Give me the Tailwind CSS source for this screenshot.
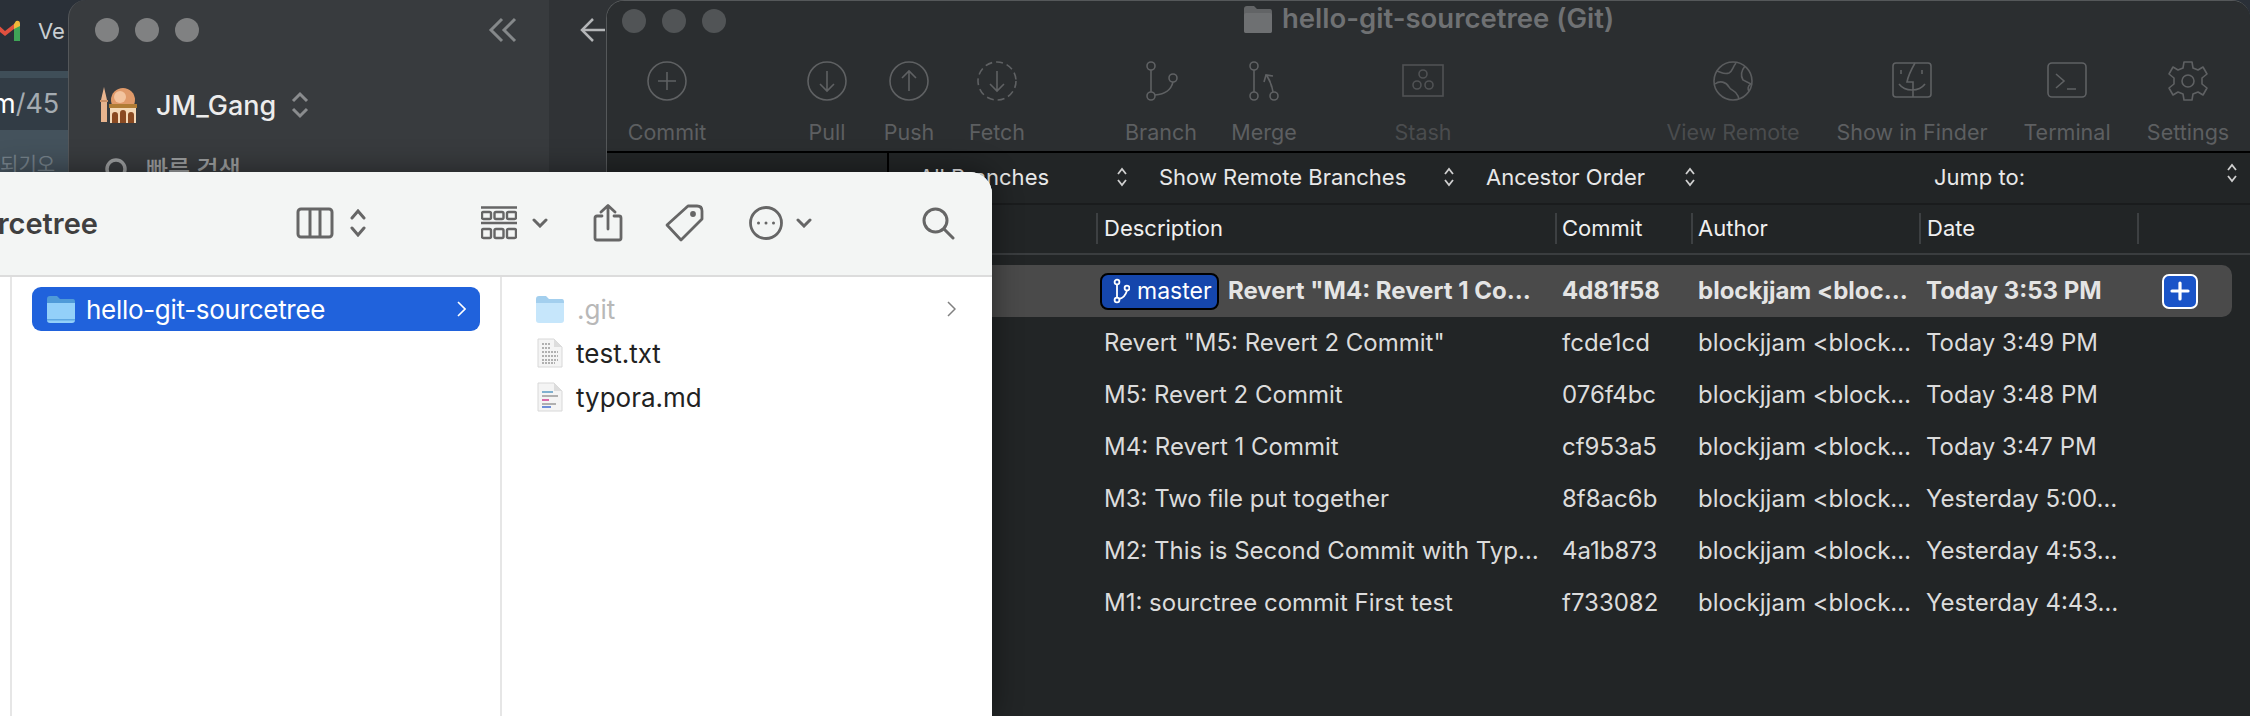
<!doctype html>
<html><head><meta charset="utf-8"><script src="https://cdn.jsdelivr.net/npm/@tailwindcss/browser@4"></script></head>
<body class="m-0 overflow-hidden">
<div class="relative w-[2250px] h-[716px] overflow-hidden bg-[#2a3038] font-['Inter','Noto_Sans_CJK_KR',sans-serif]">

  <!-- desktop window behind: browser -->
  <div class="absolute left-0 top-0 w-[80px] h-[180px] flex flex-col bg-[#2a3038]">
    <div class="h-[76px] flex items-center gap-[18px] pb-[8px] text-[#c9ced2] text-[22px]">
      <svg width="20" height="22" viewBox="0 0 20 22"><path d="M-4 3 L5 11 L14 4 V9 L5 16 L-4 9Z" fill="#e0503f"/><path d="M14 4 L16 1 Q20 0 20 4 V8 L14 12Z" fill="#f0b83a"/><path d="M14 9 L20 6 V21 H14Z" fill="#3fa457"/></svg>
      <span>Ve</span>
    </div>
    <div class="h-[8px] bg-[#3f4e58]"></div>
    <div class="h-[56px] bg-[#323c45] flex items-center text-[27px] whitespace-nowrap"><span class="text-white ml-[-8px]">m</span><span class="text-[#a4abb1]">/45</span></div>
    <div class="flex-1 bg-[#44525c] text-[#75818a] text-[20px] pt-[20px] whitespace-nowrap">되기오</div>
  </div>

  <!-- Notion-like window -->
  <div class="absolute left-[68px] top-0 w-[560px] h-[200px] rounded-tl-[18px] border-l border-[#54575a] bg-[#383b3e] flex">
    <div class="w-[480px] flex flex-col">
      <div class="h-[60px] flex items-center pl-[26px] pr-[32px]">
        <div class="flex gap-[16px]">
          <div class="w-[24px] h-[24px] rounded-full bg-[#808182]"></div>
          <div class="w-[24px] h-[24px] rounded-full bg-[#808182]"></div>
          <div class="w-[24px] h-[24px] rounded-full bg-[#808182]"></div>
        </div>
        <svg class="ml-auto" width="29" height="26" viewBox="0 0 29 26" fill="none" stroke="#85888a" stroke-width="3"><path d="M14 2 L3 13 L14 24"/><path d="M27 2 L16 13 L27 24"/></svg>
      </div>
      <div class="h-[60px] mt-[15px] flex items-center pl-[31px]">
        <svg width="38" height="38" viewBox="0 0 38 38"><path d="M4 1 L7 14 V36 H1 V14Z" fill="#e8b48e"/><rect x="0" y="14" width="8" height="2" fill="#c98f66"/><circle cx="23" cy="14" r="12" fill="#e09a6a"/><circle cx="20" cy="11" r="6" fill="#f3c49f"/><rect x="9" y="18" width="28" height="4" fill="#b07c35"/><rect x="10" y="22" width="26" height="15" fill="#f4d9b8"/><path d="M12 37 V29 a3 3 0 0 1 6 0 V37Z M20 37 V27 a3 3 0 0 1 6 0 V37Z M28 37 V29 a3 3 0 0 1 6 0 V37Z" fill="#8a4a22"/></svg>
        <span class="ml-[18px] text-[27px] leading-none font-medium text-[#ececec]">JM_Gang</span>
        <svg class="ml-[15px]" width="18" height="28" viewBox="0 0 18 28" fill="none" stroke="#8a8c8e" stroke-width="3"><path d="M2 10 L9 3 L16 10"/><path d="M2 18 L9 25 L16 18"/></svg>
      </div>
      <div class="flex items-center pl-[36px] mt-[-2px] pt-[14px] h-[60px] text-[#9c9e9f] text-[24px] font-medium">
        <svg width="24" height="24" viewBox="0 0 24 24" fill="none" stroke="#9c9e9f" stroke-width="3.5"><circle cx="11" cy="11" r="9"/><path d="M17 17 L23 23"/></svg>
        <span class="ml-[17px] leading-none">빠른 검색</span>
      </div>
    </div>
    <div class="flex-1 bg-[#303336] pt-[17px] pl-[30px]">
      <svg width="26" height="26" viewBox="0 0 26 26" fill="none" stroke="#b4b6b8" stroke-width="2.5"><path d="M14 2 L3 13 L14 24"/><path d="M3 13 H26"/></svg>
    </div>
  </div>

  <!-- Sourcetree window -->
  <div class="absolute left-[606px] top-0 w-[1644px] h-[716px] rounded-t-[18px] border-l border-t border-[#55585a] bg-[#222526] overflow-hidden flex flex-col">
    <!-- title + toolbar -->
    <div class="relative h-[152px] bg-[#2b2e30] border-b-2 border-black shrink-0">
      <div class="absolute left-[15px] top-[8px] flex gap-[16px]">
        <div class="w-[24px] h-[24px] rounded-full bg-[#515456]"></div>
        <div class="w-[24px] h-[24px] rounded-full bg-[#515456]"></div>
        <div class="w-[24px] h-[24px] rounded-full bg-[#515456]"></div>
      </div>
      <div class="absolute left-[636px] top-0 h-[36px] flex items-center">
        <svg width="30" height="27" viewBox="0 0 30 27"><path d="M1 3 Q1 0 4 0 H11 L14 3 H27 Q29 3 29 6 V24 Q29 27 27 27 H3 Q1 27 1 24Z" fill="#626466"/><rect x="1" y="7" width="28" height="20" rx="2" fill="#6e7072"/></svg>
        <span class="ml-[9px] text-[#6f7173] text-[27.500px] font-semibold whitespace-nowrap">hello-git-sourcetree (Git)</span>
      </div>
      <div class="flex pt-[59px] pl-[30px] text-[21.500px] text-[#5d5f61] whitespace-nowrap">
        <div class="w-[60px] flex flex-col items-center">
          <svg width="42" height="42" viewBox="0 0 42 42" fill="none" stroke="#5f6163" stroke-width="1.6"><circle cx="21" cy="21" r="19"/><path d="M21 12 V30 M12 21 H30"/></svg>
          <span class="mt-[16px] leading-[28px]">Commit</span>
        </div>
        <div class="w-[60px] ml-[100px] flex flex-col items-center">
          <svg width="42" height="42" viewBox="0 0 42 42" fill="none" stroke="#5f6163" stroke-width="1.6"><circle cx="21" cy="21" r="19"/><path d="M21 11 V31 M14 24 L21 31 L28 24"/></svg>
          <span class="mt-[16px] leading-[28px]">Pull</span>
        </div>
        <div class="w-[60px] ml-[22px] flex flex-col items-center">
          <svg width="42" height="42" viewBox="0 0 42 42" fill="none" stroke="#5f6163" stroke-width="1.6"><circle cx="21" cy="21" r="19"/><path d="M21 31 V11 M14 18 L21 11 L28 18"/></svg>
          <span class="mt-[16px] leading-[28px]">Push</span>
        </div>
        <div class="w-[60px] ml-[28px] flex flex-col items-center">
          <svg width="42" height="42" viewBox="0 0 42 42" fill="none" stroke="#5f6163" stroke-width="1.6"><circle cx="21" cy="21" r="19" stroke-dasharray="7 4"/><path d="M21 11 V31 M14 24 L21 31 L28 24"/></svg>
          <span class="mt-[16px] leading-[28px]">Fetch</span>
        </div>
        <div class="w-[60px] ml-[104px] flex flex-col items-center">
          <svg width="42" height="42" viewBox="0 0 42 42" fill="none" stroke="#5f6163" stroke-width="1.6"><circle cx="11" cy="6" r="4"/><circle cx="11" cy="36" r="4"/><circle cx="33" cy="18" r="4"/><path d="M11 10 V32 M15 35 C26 34 31 30 33 22"/></svg>
          <span class="mt-[16px] leading-[28px]">Branch</span>
        </div>
        <div class="w-[60px] ml-[43px] flex flex-col items-center">
          <svg width="42" height="42" viewBox="0 0 42 42" fill="none" stroke="#5f6163" stroke-width="1.6"><circle cx="11" cy="6" r="4"/><circle cx="11" cy="36" r="4"/><circle cx="31" cy="36" r="4"/><path d="M11 10 V32 M30 32 C29 26 28 22 24 16 M21 22 L23 15 L30 16"/></svg>
          <span class="mt-[16px] leading-[28px]">Merge</span>
        </div>
        <div class="w-[60px] ml-[99px] flex flex-col items-center text-[#4a4c4e]">
          <svg width="42" height="42" viewBox="0 0 42 42" fill="none" stroke="#505254" stroke-width="1.6"><rect x="1" y="5" width="40" height="31"/><circle cx="21" cy="14" r="4"/><circle cx="15" cy="25" r="4"/><circle cx="27" cy="25" r="4"/></svg>
          <span class="mt-[16px] leading-[28px]">Stash</span>
        </div>
        <div class="w-[60px] ml-[250px] flex flex-col items-center text-[#4a4c4e]">
          <svg width="42" height="42" viewBox="0 0 42 42" fill="none" stroke="#5a5c5e" stroke-width="1.6"><circle cx="21" cy="21" r="19"/><path d="M24 3 C20 8 21 11 17 13 C12 15 9 12 5 11 M3 24 C8 20 14 22 17 27 C19 31 24 30 26 36 L27 39 M33 6 C29 11 28 15 31 20 L39 24 C35 26 36 30 37 31"/></svg>
          <span class="mt-[16px] leading-[28px]">View Remote</span>
        </div>
        <div class="w-[60px] ml-[119px] flex flex-col items-center">
          <svg width="42" height="42" viewBox="0 0 42 42" fill="none" stroke="#5f6163" stroke-width="1.6"><rect x="2" y="3" width="38" height="34" rx="3"/><path d="M24 3 C20 10 17 16 16 22 H22 V37 M10 10 V14 M31 10 V14 M8 24 C14 32 28 32 34 24"/></svg>
          <span class="mt-[16px] leading-[28px]">Show in Finder</span>
        </div>
        <div class="w-[60px] ml-[95px] flex flex-col items-center">
          <svg width="42" height="42" viewBox="0 0 42 42" fill="none" stroke="#5f6163" stroke-width="1.6"><rect x="2" y="3" width="38" height="34" rx="4"/><path d="M10 14 L18 21 L10 28 M21 29 H30"/></svg>
          <span class="mt-[16px] leading-[28px]">Terminal</span>
        </div>
        <div class="w-[60px] ml-[61px] flex flex-col items-center">
          <svg width="42" height="42" viewBox="0 0 42 42" fill="none" stroke="#5f6163" stroke-width="1.6"><circle cx="21" cy="21" r="6"/><path d="M17 2 H25 L26 8 L31 10 L36 7 L40 14 L35 18 V24 L40 28 L36 35 L31 32 L26 34 L25 40 H17 L16 34 L11 32 L6 35 L2 28 L7 24 V18 L2 14 L6 7 L11 10 L16 8Z" stroke-linejoin="round"/></svg>
          <span class="mt-[16px] leading-[28px]">Settings</span>
        </div>
      </div>
    </div>

    <!-- filter bar -->
    <div class="relative h-[52px] shrink-0 bg-[#222526] border-b-2 border-[#1a1c1d] flex items-center pb-[2px] text-[22px] text-[#e8e8e8] whitespace-nowrap">
      <div class="absolute left-[280px] top-0 w-[2px] h-[50px] bg-black"></div>
      <span class="ml-[312px] w-[196px]">All Branches</span>
      <svg class="ml-[2px]" width="10" height="20" viewBox="0 0 10 20" fill="none" stroke="#cfcfcf" stroke-width="1.8"><path d="M1 7 L5 2 L9 7 M1 13 L5 18 L9 13"/></svg>
      <span class="ml-[32px] w-[280px]">Show Remote Branches</span>
      <svg class="ml-[5px]" width="10" height="20" viewBox="0 0 10 20" fill="none" stroke="#cfcfcf" stroke-width="1.8"><path d="M1 7 L5 2 L9 7 M1 13 L5 18 L9 13"/></svg>
      <span class="ml-[32px] w-[196px]">Ancestor Order</span>
      <svg class="ml-[3px]" width="10" height="20" viewBox="0 0 10 20" fill="none" stroke="#cfcfcf" stroke-width="1.8"><path d="M1 7 L5 2 L9 7 M1 13 L5 18 L9 13"/></svg>
      <span class="ml-[239px] w-[293px]">Jump to:</span>
      <svg class="mt-[-8px]" width="10" height="20" viewBox="0 0 10 20" fill="none" stroke="#cfcfcf" stroke-width="1.8"><path d="M1 7 L5 2 L9 7 M1 13 L5 18 L9 13"/></svg>
    </div>

    <!-- table header -->
    <div class="h-[50px] shrink-0 border-b-2 border-[#3a3d3f] flex items-center pb-[2px] text-[22px] text-[#f0f0f0] whitespace-nowrap">
      <div class="w-[489px]"></div>
      <div class="w-[459px] h-[31px] border-l-2 border-[#3d4042] pl-[6px] leading-[31px]">Description</div>
      <div class="w-[136px] h-[31px] border-l-2 border-[#3d4042] pl-[5px] leading-[31px]">Commit</div>
      <div class="w-[228px] h-[31px] border-l-2 border-[#3d4042] pl-[5px] leading-[31px]">Author</div>
      <div class="w-[218px] h-[31px] border-l-2 border-[#3d4042] pl-[6px] leading-[31px]">Date</div>
      <div class="w-[2px] h-[31px] bg-[#3d4042]"></div>
    </div>

    <!-- rows -->
    <div class="pt-[10px] flex flex-col text-[24px] text-[#dcdcdc] whitespace-nowrap">
      <div class="h-[52px] w-[1625px] bg-[#4a4a4a] rounded-r-[10px] flex items-center font-bold text-[#e4e4e4]">
        <div class="w-[493px] shrink-0"></div>
        <div class="w-[119px] h-[37px] shrink-0 rounded-[8px] bg-[#1546ac] border-2 border-black flex items-center pl-[10px] text-white font-normal text-[23px]">
          <svg width="18" height="26" viewBox="0 0 18 26" fill="none" stroke="white" stroke-width="1.8"><circle cx="5" cy="4" r="2.4"/><circle cx="5" cy="22" r="2.4"/><circle cx="15" cy="10" r="2.4"/><path d="M5 6.5 V19.5 M7 21 C12 20 14 16 15 12.5"/></svg>
          <span class="ml-[7px]">master</span>
        </div>
        <div class="w-[343px] shrink-0 pl-[9px]">Revert "M4: Revert 1 Co…</div>
        <div class="w-[136px] shrink-0">4d81f58</div>
        <div class="w-[228px] shrink-0">blockjjam &lt;bloc…</div>
        <div class="w-[236px] shrink-0">Today 3:53 PM</div>
        <div class="w-[36px] h-[35px] shrink-0 rounded-[7px] bg-[#1a54c8] border-[2.5px] border-white flex items-center justify-center">
          <svg width="20" height="20" viewBox="0 0 20 20" stroke="white" stroke-width="3.2" stroke-linecap="round"><path d="M10 2 V18 M2 10 H18"/></svg>
        </div>
      </div>
      <div class="h-[52px] flex items-center"><div class="w-[497px] shrink-0"></div><div class="w-[458px] shrink-0">Revert "M5: Revert 2 Commit"</div><div class="w-[136px] shrink-0">fcde1cd</div><div class="w-[228px] shrink-0">blockjjam &lt;block…</div><div>Today 3:49 PM</div></div>
      <div class="h-[52px] flex items-center"><div class="w-[497px] shrink-0"></div><div class="w-[458px] shrink-0">M5: Revert 2 Commit</div><div class="w-[136px] shrink-0">076f4bc</div><div class="w-[228px] shrink-0">blockjjam &lt;block…</div><div>Today 3:48 PM</div></div>
      <div class="h-[52px] flex items-center"><div class="w-[497px] shrink-0"></div><div class="w-[458px] shrink-0">M4: Revert 1 Commit</div><div class="w-[136px] shrink-0">cf953a5</div><div class="w-[228px] shrink-0">blockjjam &lt;block…</div><div>Today 3:47 PM</div></div>
      <div class="h-[52px] flex items-center"><div class="w-[497px] shrink-0"></div><div class="w-[458px] shrink-0">M3: Two file put together</div><div class="w-[136px] shrink-0">8f8ac6b</div><div class="w-[228px] shrink-0">blockjjam &lt;block…</div><div>Yesterday 5:00…</div></div>
      <div class="h-[52px] flex items-center"><div class="w-[497px] shrink-0"></div><div class="w-[458px] shrink-0">M2: This is Second Commit with Typ…</div><div class="w-[136px] shrink-0">4a1b873</div><div class="w-[228px] shrink-0">blockjjam &lt;block…</div><div>Yesterday 4:53…</div></div>
      <div class="h-[52px] flex items-center"><div class="w-[497px] shrink-0"></div><div class="w-[458px] shrink-0">M1: sourctree commit First test</div><div class="w-[136px] shrink-0">f733082</div><div class="w-[228px] shrink-0">blockjjam &lt;block…</div><div>Yesterday 4:43…</div></div>
    </div>
  </div>

  <!-- Finder window -->
  <div class="absolute left-0 top-[172px] w-[992px] h-[544px] bg-white rounded-tr-[22px] overflow-hidden shadow-[0_0_30px_rgba(0,0,0,0.45)] flex flex-col">
    <div class="h-[105px] shrink-0 bg-[#f3f5f4] border-b-2 border-[#dcdcdc] relative">
      <div class="absolute right-[894px] top-[32px] text-[29px] leading-[40px] font-semibold text-[#3f3f3f] whitespace-nowrap">sourcetree</div>
      <div class="flex items-center h-full pl-[296px] pb-[1px]">
        <svg width="38" height="32" viewBox="0 0 38 32" fill="none" stroke="#666" stroke-width="3"><rect x="2" y="2" width="34" height="28" rx="3"/><path d="M14 2 V30 M24 2 V30"/></svg>
        <svg class="ml-[16px]" width="16" height="28" viewBox="0 0 16 28" fill="none" stroke="#666" stroke-width="3" stroke-linecap="round"><path d="M2 9 L8 2 L14 9 M2 19 L8 26 L14 19"/></svg>
        <svg class="ml-[115px]" width="36" height="34" viewBox="0 0 36 34" fill="none" stroke="#666" stroke-width="2.4"><path d="M0 1.5 H36 M0 17 H36" stroke-width="2.6"/><rect x="1" y="6" width="9" height="7" rx="1.5"/><rect x="13.500" y="6" width="9" height="7" rx="1.5"/><rect x="26" y="6" width="9" height="7" rx="1.5"/><rect x="1" y="23" width="9" height="9" rx="1.5"/><rect x="13.500" y="23" width="9" height="9" rx="1.5"/><rect x="26" y="23" width="9" height="9" rx="1.5"/></svg>
        <svg class="ml-[15px]" width="16" height="10" viewBox="0 0 16 10" fill="none" stroke="#666" stroke-width="3" stroke-linecap="round"><path d="M2 2 L8 8 L14 2"/></svg>
        <svg class="ml-[45px]" width="30" height="38" viewBox="0 0 30 38" fill="none" stroke="#666" stroke-width="2.8" stroke-linecap="round" stroke-linejoin="round"><path d="M9 12 H4 Q2 12 2 14 V34 Q2 36 4 36 H26 Q28 36 28 34 V14 Q28 12 26 12 H21"/><path d="M15 25 V2 M8 8 L15 1.500 L22 8"/></svg>
        <svg class="ml-[41px]" width="40" height="38" viewBox="0 0 40 38" fill="none" stroke="#666" stroke-width="2.800" stroke-linejoin="round"><path d="M24 2 H33 Q38 2 38 7 V15 L17 36 L3 21Z"/><circle cx="29" cy="10" r="1.500" fill="#666"/></svg>
        <svg class="ml-[45px]" width="34" height="34" viewBox="0 0 34 34" fill="none" stroke="#666" stroke-width="2.800"><circle cx="17" cy="17" r="15.500"/><circle cx="9.500" cy="17" r="1.500" fill="#666" stroke="none"/><circle cx="17" cy="17" r="1.500" fill="#666" stroke="none"/><circle cx="24.500" cy="17" r="1.500" fill="#666" stroke="none"/></svg>
        <svg class="ml-[13px]" width="16" height="10" viewBox="0 0 16 10" fill="none" stroke="#666" stroke-width="3" stroke-linecap="round"><path d="M2 2 L8 8 L14 2"/></svg>
        <svg class="ml-[110px]" width="33" height="33" viewBox="0 0 33 33" fill="none" stroke="#666" stroke-width="3" stroke-linecap="round"><circle cx="13.500" cy="13.500" r="11.500"/><path d="M22 22 L31 31"/></svg>
      </div>
    </div>
    <div class="flex-1 flex">
      <div class="w-[12px] border-r-2 border-[#e6e6e6]"></div>
      <div class="w-[490px] pt-[10px] pl-[20px] border-r-2 border-[#e6e6e6]">
        <div class="w-[448px] h-[44px] rounded-[9px] bg-[#2062dc] flex items-center pl-[14px] pr-[14px] text-white text-[26px]">
          <svg width="30" height="27" viewBox="0 0 30 27"><path d="M1 3 Q1 0 4 0 H11 L14 3 H27 Q29 3 29 6 V12 H1Z" fill="#4f9ad8"/><path d="M1 7 H29 V24 Q29 27 26 27 H4 Q1 27 1 24Z" fill="#93d0f9"/><rect x="1" y="23" width="28" height="1.500" fill="#5fa8e2"/></svg>
          <span class="ml-[10px] tracking-[-0.3px]">hello-git-sourcetree</span>
          <svg class="ml-auto" width="9" height="16" viewBox="0 0 9 16" fill="none" stroke="white" stroke-width="1.600"><path d="M1 1 L8 8 L1 15"/></svg>
        </div>
      </div>
      <div class="flex-1 pt-[10px] pl-[33px] pr-[36px] flex flex-col text-[26px] text-[#222]">
        <div class="h-[44px] flex items-center text-[#b8b8b8]">
          <svg width="30" height="27" viewBox="0 0 30 27"><path d="M1 3 Q1 0 4 0 H11 L14 3 H27 Q29 3 29 6 V12 H1Z" fill="#a3cfee"/><path d="M1 7 H29 V24 Q29 27 26 27 H4 Q1 27 1 24Z" fill="#c6e6fb"/></svg>
          <span class="ml-[12px]">.git</span>
          <svg class="ml-auto" width="9" height="16" viewBox="0 0 9 16" fill="none" stroke="#808080" stroke-width="1.500"><path d="M1 1 L8 8 L1 15"/></svg>
        </div>
        <div class="h-[44px] flex items-center">
          <svg class="ml-[2px]" width="26" height="30" viewBox="0 0 26 30"><path d="M1 1 H17 L25 9 V29 H1Z" fill="#f4f4f4" stroke="#d8d8d8"/><path d="M17 1 V9 H25Z" fill="#ddd"/><path d="M5 6 H14 M5 10 H14 M5 14 H21 M5 18 H21 M5 22 H21 M5 25 H18" stroke="#b0b0b0" stroke-width="2" stroke-dasharray="2 1"/></svg>
          <span class="ml-[13px]">test.txt</span>
        </div>
        <div class="h-[44px] flex items-center">
          <svg class="ml-[2px]" width="26" height="30" viewBox="0 0 26 30"><path d="M1 1 H17 L25 9 V29 H1Z" fill="#f4f4f4" stroke="#d8d8d8"/><path d="M17 1 V9 H25Z" fill="#ddd"/><path d="M5 10 H16" stroke="#7fb0cf" stroke-width="2"/><path d="M5 14 H21 M5 22 H19" stroke="#b0b0b0" stroke-width="2"/><path d="M5 18 H12" stroke="#d86aa8" stroke-width="2"/><path d="M5 25 H14" stroke="#6f8fd8" stroke-width="2"/></svg>
          <span class="ml-[13px]">typora.md</span>
        </div>
      </div>
    </div>
  </div>
</div>
</body></html>
